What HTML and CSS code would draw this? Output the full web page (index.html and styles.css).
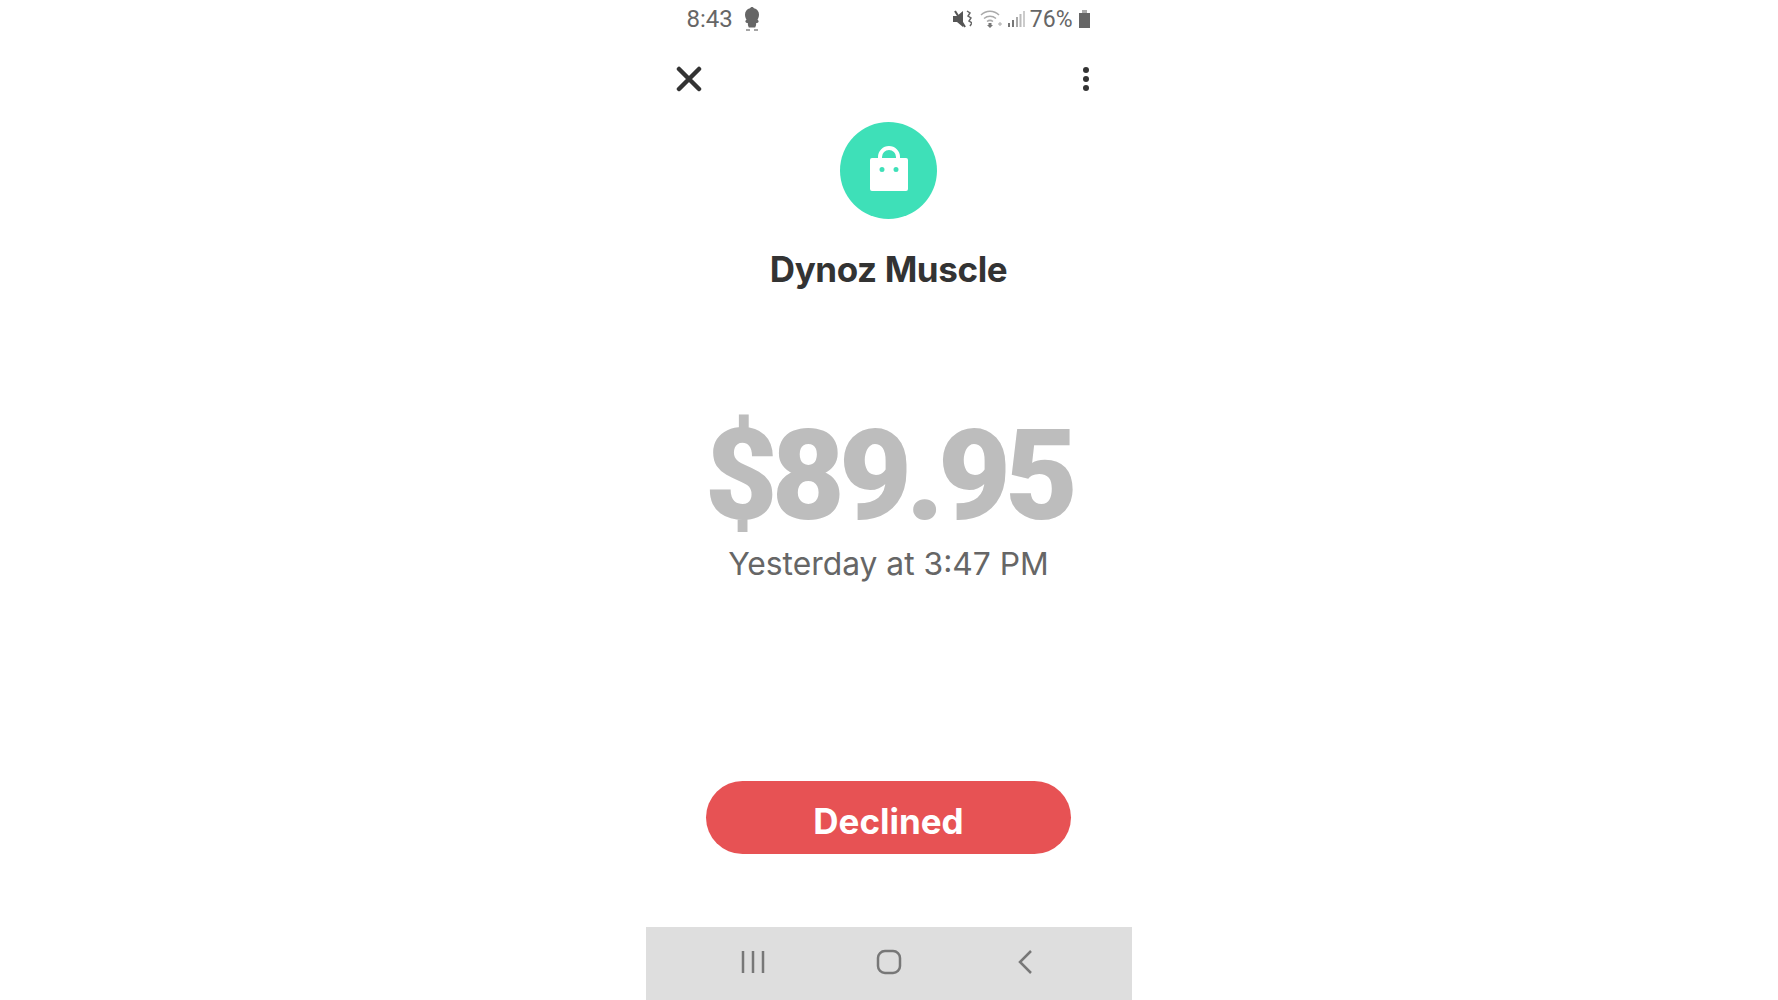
FILE: index.html
```html
<!DOCTYPE html>
<html lang="en">
<head>
  <meta charset="UTF-8">
  <meta name="viewport" content="width=device-width, initial-scale=1.0">
  <title>Dynoz Muscle</title>
  <link rel="stylesheet" href="styles.css">
</head>
<body>
  <div class="phone">
    <div class="status-bar">
      <div class="status-left">
        <span class="status-text">8:43</span>
        <svg class="status-bug" width="20" height="26" viewBox="0 0 20 26">
          <path fill="#666" d="M10 1c1 0 1.500.6 2 1.300 3 .7 5 3.200 5 6.200 0 2.400-.8 4-1.500 5.200 1 .5 1.300 1.500 1 2.300-.4.900-1.300 1.200-2.300 1 .1 1.500-.2 3-1 4.500H6.800c-.8-1.500-1.100-3-1-4.500-1 .2-1.900-.1-2.300-1-.3-.8 0-1.800 1-2.300C3.800 12.500 3 10.900 3 8.500c0-3 2-5.500 5-6.200C8.500 1.600 9 1 10 1z"/>
          <path stroke="#888" stroke-width="1.500" d="M4 24h4M12 24h4"/>
        </svg>
      </div>
      <div class="status-right">
        <svg class="status-mute" width="20" height="20" viewBox="0 0 20 20">
          <path fill="#555" d="M1 7h4l6-5v16l-6-5H1z"/>
          <path stroke="#555" stroke-width="2" d="M3 2l10 16"/>
          <path fill="none" stroke="#666" stroke-width="1.500" d="M15 2l3 2-2 3 3 2-2 3 3 2-2 3"/>
        </svg>
        <svg width="23" height="20" viewBox="0 0 23 20">
          <g fill="none" stroke="#aaa" stroke-width="1.500">
            <path d="M1 6c5-5 13-5 18 0"/>
            <path d="M4 9.500c3.500-3 8.500-3 12 0"/>
            <path d="M7 12.500c2-1.500 4-1.500 6 0"/>
          </g>
          <path fill="#777" d="M8.500 14h3v2H13l-3 3-3-3h1.500z"/>
          <path stroke="#aaa" stroke-width="1" d="M18 15h4M20 13v4"/>
        </svg>
        <svg class="status-signal" width="18" height="18" viewBox="0 0 18 18">
          <rect x="1" y="13" width="2" height="4" fill="#777"/>
          <rect x="5" y="10" width="2" height="7" fill="#777"/>
          <rect x="9" y="7" width="2" height="10" fill="#aaa"/>
          <rect x="12.500" y="4" width="2" height="13" fill="#bbb"/>
          <rect x="16" y="1" width="2" height="16" fill="#ccc"/>
        </svg>
        <span class="status-text status-battery-text">76%</span>
        <svg width="13" height="20" viewBox="0 0 13 20">
          <rect x="4" y="1" width="5" height="3" fill="#aaa"/>
          <rect x="1" y="4" width="11" height="15" fill="#666"/>
        </svg>
      </div>
    </div>

    <div class="toolbar">
      <svg width="26" height="26" viewBox="0 0 26 26">
        <path stroke="#333" stroke-width="4.500" stroke-linecap="round" d="M3 3l20 20M23 3L3 23"/>
      </svg>
      <svg width="8" height="26" viewBox="0 0 8 26">
        <circle cx="4" cy="4" r="3" fill="#333"/>
        <circle cx="4" cy="13" r="3" fill="#333"/>
        <circle cx="4" cy="22" r="3" fill="#333"/>
      </svg>
    </div>

    <div class="merchant">
      <div class="merchant-icon">
        <svg width="40" height="48" viewBox="0 0 40 48">
          <path fill="none" stroke="#fff" stroke-width="4" d="M11 15v-3a9 9 0 0 1 18 0v3"/>
          <path fill="#fff" fill-rule="evenodd" d="M3 13h34a2 2 0 0 1 2 2v29a2 2 0 0 1-2 2H3a2 2 0 0 1-2-2V15a2 2 0 0 1 2-2zm10 9a2.500 2.500 0 1 0 0 5 2.500 2.500 0 0 0 0-5zm14 0a2.500 2.500 0 1 0 0 5 2.500 2.500 0 0 0 0-5z"/>
        </svg>
      </div>
      <h1 class="merchant-name">Dynoz Muscle</h1>
    </div>

    <div class="amount">
      <div class="amount-value">$89.95</div>
      <div class="amount-date">Yesterday at 3:47 PM</div>
    </div>

    <div class="status-pill">Declined</div>

    <div class="nav-bar">
      <svg width="24" height="24" viewBox="0 0 24 24">
        <path stroke="#777" stroke-width="2.500" d="M2 1v22M12 1v22M22 1v22"/>
      </svg>
      <svg width="26" height="26" viewBox="0 0 26 26">
        <rect x="2" y="2" width="22" height="22" rx="7" fill="none" stroke="#777" stroke-width="2.500"/>
      </svg>
      <svg width="16" height="24" viewBox="0 0 16 24">
        <path fill="none" stroke="#777" stroke-width="2.500" d="M14 1L3 12l11 11"/>
      </svg>
    </div>
  </div>
</body>
</html>
```

FILE: styles.css
```css
html, body {
  height: 100%;
}
body {
  font-family: Inter, "Liberation Sans", sans-serif;
  margin: 0;
  background-color: #fff;
  display: flex;
  justify-content: center;
}
.phone {
  width: 486px;
  height: 1000px;
  margin-left: -1px;
  display: flex;
  flex-direction: column;
  align-items: center;
  overflow: hidden;
}
.status-bar {
  width: 100%;
  box-sizing: border-box;
  height: 38px;
  padding: 0 41px 0 41px;
  display: flex;
  justify-content: space-between;
  align-items: center;
}
.status-left, .status-right {
  display: flex;
  align-items: center;
}
.status-left {
  gap: 9px;
}
.status-right {
  gap: 5px;
}
.status-mute {
  margin-right: 3px;
}
.status-signal {
  margin-left: -1px;
}
.status-text {
  font-family: Roboto, sans-serif;
  font-size: 24px;
  color: #666;
}
.status-battery-text {
  font-size: 23px;
}
.toolbar {
  width: 100%;
  box-sizing: border-box;
  height: 84px;
  padding: 0 42px 2px 30px;
  display: flex;
  justify-content: space-between;
  align-items: center;
}
.merchant {
  display: flex;
  flex-direction: column;
  align-items: center;
}
.merchant-icon {
  width: 97px;
  height: 97px;
  box-sizing: border-box;
  padding-bottom: 3px;
  border-radius: 50%;
  background-color: #3ee0b8;
  display: flex;
  align-items: center;
  justify-content: center;
}
.merchant-name {
  margin: 27px 0 0;
  font-size: 35px;
  line-height: 46px;
  font-weight: 700;
  letter-spacing: -0.4px;
  color: #333;
}
.amount {
  margin-top: 132px;
  display: flex;
  flex-direction: column;
  align-items: center;
}
.amount-value {
  font-family: Roboto, sans-serif;
  font-size: 126px;
  line-height: 104px;
  font-weight: 900;
  letter-spacing: -6px;
  color: #bdbdbd;
}
.amount-date {
  margin-top: 15px;
  font-size: 31.8px;
  line-height: 42px;
  color: #666;
}
.status-pill {
  margin-top: 196px;
  width: 365px;
  height: 73px;
  border-radius: 37px;
  background-color: #e75254;
  color: #fff;
  font-size: 35px;
  font-weight: 700;
  display: flex;
  align-items: center;
  justify-content: center;
  padding-top: 6px;
  box-sizing: border-box;
}
.nav-bar {
  margin-top: auto;
  width: 100%;
  height: 73px;
  flex-shrink: 0;
  background-color: #dedede;
  display: grid;
  grid-template-columns: repeat(3, 136px);
  justify-content: center;
  justify-items: center;
  align-items: center;
  padding-bottom: 4px;
  box-sizing: border-box;
}
```
